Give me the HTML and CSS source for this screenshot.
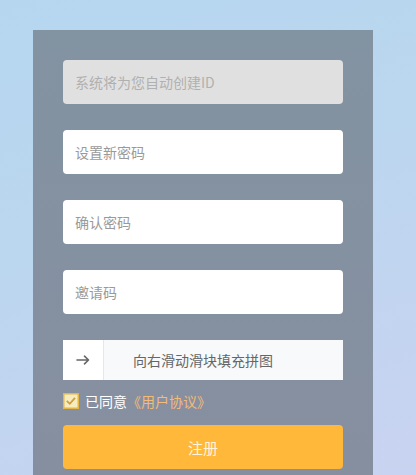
FILE: index.html
```html
<!DOCTYPE html>
<html lang="zh">
<head>
<meta charset="utf-8">
<link rel="stylesheet" href="styles.css">
</head>
<body>
<div class="page">
  <div class="panel">
    <div class="field disabled">系统将为您自动创建ID</div>
    <div class="field">设置新密码</div>
    <div class="field">确认密码</div>
    <div class="field">邀请码</div>
    <div class="slider">
      <div class="handle">
        <svg width="14" height="10" viewBox="0 0 14 10"><path d="M1 5H12.5M8.5 1.2L12.5 5L8.5 8.8" fill="none" stroke="#666" stroke-width="1.6" stroke-linecap="round" stroke-linejoin="round"/></svg>
      </div>
      <span class="slider-text">向右滑动滑块填充拼图</span>
    </div>
    <div class="agree">
      <svg class="check" width="16" height="16" viewBox="0 0 16 16"><rect x="0.75" y="0.75" width="14.5" height="14.5" fill="#f8ebbd" stroke="#e3b64a" stroke-width="1.5"/><path d="M3.8 7.8L6.8 10.8L12 4.8" fill="none" stroke="#c9a042" stroke-width="1.8"/></svg>
      <span class="agree-text">已同意</span><span class="link">《用户协议》</span>
    </div>
    <div class="btn">注册</div>
  </div>
</div>
</body>
</html>
```
FILE: styles.css
```css
html, body {
  margin: 0;
  padding: 0;
}
body {
  width: 416px;
  height: 475px;
  overflow: hidden;
  font-family: "Noto Sans CJK SC", "Noto Sans", sans-serif;
  background: linear-gradient(160deg, #b6d6f0 0%, #bcd6ef 45%, #c9d3f1 100%);
}
.page {
  padding: 30px 0 0 33px;
}
.panel {
  width: 280px;
  height: 415px;
  padding: 30px 30px 0 30px;
  background: linear-gradient(180deg, #8293a2 0%, #868fa0 100%);
  display: flex;
  flex-direction: column;
}
.field {
  height: 44px;
  box-sizing: border-box;
  background: #fff;
  border-radius: 4px;
  padding-left: 12px;
  display: flex;
  align-items: center;
  font-size: 14px;
  color: #9a9a9a;
  margin-bottom: 26px;
}
.field.disabled {
  background: #e0e0e0;
  color: #b0b0b0;
}
.slider {
  position: relative;
  height: 40px;
  background: #f7f9fa;
  display: flex;
  align-items: center;
  justify-content: center;
}
.handle {
  position: absolute;
  left: 0;
  top: 0;
  width: 41px;
  height: 40px;
  box-sizing: border-box;
  background: #fff;
  border-right: 1px solid #e4e7eb;
  display: flex;
  align-items: center;
  justify-content: center;
}
.slider-text {
  font-size: 14px;
  color: #666;
}
.agree {
  margin-top: 12px;
  height: 18px;
  display: flex;
  align-items: center;
  font-size: 14px;
}
.check {
  margin-right: 6px;
}
.agree-text {
  color: #fff;
}
.link {
  color: #f2bb78;
}
.btn {
  margin-top: 15px;
  height: 44px;
  border-radius: 4px;
  background: #ffb83a;
  color: #fff6dc;
  font-size: 15px;
  display: flex;
  align-items: center;
  justify-content: center;
}
```
